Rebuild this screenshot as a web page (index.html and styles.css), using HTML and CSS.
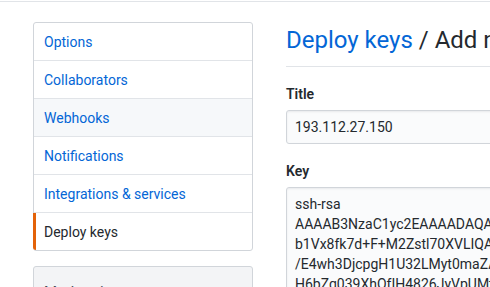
FILE: index.html
```html
<!DOCTYPE html>
<html>
  <head>
    <title>Deploy keys / Add new</title>
    <link rel="stylesheet" href="styles.css">
  </head>
  <body>
    <div class="topline"></div>
    <div class="page">
      <div class="sidebar">
        <div class="menu">
          <a class="menu-item" href="#">Options</a>
          <a class="menu-item" href="#">Collaborators</a>
          <a class="menu-item hover" href="#">Webhooks</a>
          <a class="menu-item" href="#">Notifications</a>
          <a class="menu-item" href="#">Integrations &amp; services</a>
          <a class="menu-item selected" href="#">Deploy keys</a>
        </div>
        <div class="menu menu-gray">
          <div class="menu-heading">Moderation</div>
        </div>
      </div>
      <div class="main">
        <div class="subhead">
          <h2 class="subhead-title"><a href="#">Deploy keys</a> / Add new</h2>
        </div>
        <div class="form-group">
          <label class="label">Title</label>
          <input class="text" type="text" value="193.112.27.150">
        </div>
        <div class="form-group">
          <label class="label">Key</label>
          <textarea class="key" wrap="off">ssh-rsa
AAAAB3NzaC1yc2EAAAADAQABAAABAQC
b1Vx8fk7d+F+M2Zstl70XVLIQAbcW2x
/E4wh3DjcpgH1U32LMyt0maZAkq9pLr
H6bZg039XhOfIH4826JyVpUMtQx7sNe
uT2mKw8dRfZaLp0QeYc5vHn1GjXs4oB</textarea>
        </div>
      </div>
    </div>
  </body>
</html>
```
FILE: styles.css
```css
html, body {
  overflow: hidden;
}

body {
  margin: 0;
  background-color: #FFFFFF;
  font-family: Roboto, "Liberation Sans", sans-serif;
  font-size: 14px;
  line-height: 1.5;
  color: #24292E;
}

a {
  color: #0366D6;
  text-decoration: none;
}

.topline {
  margin-top: 1px;
  height: 1px;
  background-color: #E1E4E8;
}

.page {
  display: flex;
  padding: 20px 0 0 33px;
  width: 700px;
}

.sidebar {
  flex: 0 0 220px;
  margin-right: 33px;
}

.menu {
  border: 1px solid #D1D5DA;
  border-radius: 3px;
  margin-bottom: 15px;
  background-color: #FFFFFF;
}

.menu-item {
  display: block;
  padding: 9px 10px 7px;
  border-bottom: 1px solid #E1E4E8;
  line-height: 21px;
}

.menu-item:first-child {
  border-radius: 3px 3px 0 0;
}

.menu-item:last-child {
  border-bottom: 0;
  border-radius: 0 0 3px 3px;
}

.menu-item.hover {
  background-color: #F6F8FA;
}

.menu-item.selected {
  margin-left: -1px;
  padding-left: 8px;
  border-left: 3px solid #E36209;
  color: #24292E;
}

.menu-gray {
  background-color: #F3F4F6;
}

.menu-heading {
  padding: 14px 10px 10px;
  font-size: 15px;
  color: #444D56;
}

.main {
  flex: 1;
}

.subhead {
  padding-bottom: 8px;
  margin-bottom: 16px;
  border-bottom: 1px solid #E1E4E8;
}

.subhead-title {
  margin: 0;
  font-size: 24px;
  font-weight: 400;
  line-height: 36px;
}

.form-group {
  margin-bottom: 16px;
}

.label {
  display: block;
  margin-bottom: 6px;
  padding-top: 1px;
  font-weight: 600;
  line-height: 20px;
}

input.text,
textarea.key {
  display: block;
  box-sizing: border-box;
  width: 100%;
  padding: 6px 8px;
  border: 1px solid #D1D5DA;
  border-radius: 3px;
  background-color: #FAFBFC;
  font-family: Roboto, "Liberation Sans", sans-serif;
  font-size: 14px;
  line-height: 20px;
  color: #24292E;
  box-shadow: inset 0 1px 2px rgba(27, 31, 35, 0.075);
}

textarea.key {
  height: 200px;
  resize: none;
  overflow: hidden;
  white-space: pre;
}
```
